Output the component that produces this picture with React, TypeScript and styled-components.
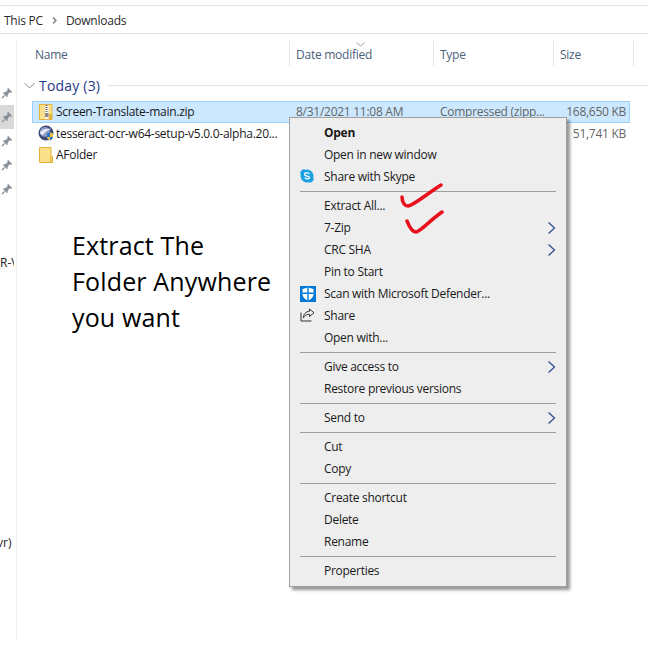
import React from 'react'
import styled, { createGlobalStyle } from 'styled-components'

const GlobalStyle = createGlobalStyle`
  html, body {
    margin: 0;
    background: #fff;
    font-family: 'Open Sans', 'Noto Sans', sans-serif;
  }
`

const Page = styled.div`
  position: relative;
  width: 648px;
  height: 646px;
  overflow: hidden;
  background: #fff;
  padding-top: 5px;
  box-sizing: border-box;
`

const Breadcrumb = styled.div`
  display: flex;
  align-items: center;
  height: 27px;
  padding-left: 4px;
  font-size: 12px;
  letter-spacing: -0.25px;
  color: #2b2b2b;
  border-top: 1px solid #e3e3e3;
  border-bottom: 1px solid #e0e0e0;
`

const Crumb = styled.span`
  margin-top: 1px;
`

const CrumbArrow = styled.svg`
  width: 5px;
  height: 7px;
  margin: 2px 9px 0 9px;
`

const Body = styled.div`
  display: flex;
  margin-top: 7px;
`

const Sidebar = styled.div`
  width: 16px;
  height: 558px;
  flex: none;
  border-right: 1px solid #f0f0f0;
  overflow: hidden;
  padding-top: 40px;
`

const PinRow = styled.div<{ $active?: boolean }>`
  display: flex;
  align-items: center;
  justify-content: center;
  width: 14px;
  height: 24px;
  background: ${p => (p.$active ? '#d9d9d9' : 'transparent')};
`

const CutLabel = styled.div<{ $top: number; $indent?: number }>`
  width: 14px;
  overflow: hidden;
  white-space: nowrap;
  margin-top: ${p => p.$top}px;
  text-indent: ${p => p.$indent ?? 0}px;
  font-size: 12px;
  line-height: 16px;
  color: #222;
`

const Main = styled.div`
  flex: 1;
  min-width: 0;
`

const HeaderRow = styled.div`
  display: grid;
  grid-template-columns: 273px 144px 120px 80px;
  height: 25px;
`

const HeaderCell = styled.div`
  position: relative;
  display: flex;
  align-items: center;
  padding: 2px 0 0 6px;
  font-size: 12px;
  letter-spacing: -0.25px;
  color: #4c607a;
  border-right: 1px solid #e5e5e5;
  &:first-child {
    padding-left: 18px;
  }
`

const SortCaret = styled.svg`
  position: absolute;
  top: 1px;
  left: 66px;
  width: 9px;
  height: 5px;
`

const GroupRow = styled.div`
  display: flex;
  align-items: center;
  height: 24px;
  margin-top: 7px;
  padding-left: 7px;
  color: #1e3a8a;
  font-size: 14px;
  letter-spacing: 0.2px;
`

const GroupChevron = styled.svg`
  width: 11px;
  height: 7px;
  margin-right: 4px;
`

const GroupLine = styled.div`
  flex: 1;
  height: 1px;
  margin-left: 7px;
  background: #e3e3e3;
`

const FileList = styled.div`
  margin: 4px 18px 0 15px;
`

const FileRow = styled.div<{ $selected?: boolean }>`
  display: grid;
  grid-template-columns: 23px 240px 144px 90px 100px;
  align-items: center;
  height: 21.5px;
  box-sizing: border-box;
  border: 1px solid ${p => (p.$selected ? '#99d1ff' : 'transparent')};
  background: ${p => (p.$selected ? '#cce8ff' : 'transparent')};
  font-size: 12px;
  letter-spacing: -0.27px;
  white-space: nowrap;
`

const FileIcon = styled.div`
  display: flex;
  justify-content: center;
  padding-left: 2px;
`

const FileName = styled.span`
  color: #1a1a1a;
`

const FileMeta = styled.span<{ $right?: boolean }>`
  color: #666;
  text-align: ${p => (p.$right ? 'right' : 'left')};
  padding-right: ${p => (p.$right ? '4px' : 0)};
`

const Note = styled.div`
  position: absolute;
  left: 72px;
  top: 227px;
  font-size: 25px;
  line-height: 36px;
  letter-spacing: 0.15px;
  color: #000;
`

const Menu = styled.div`
  position: absolute;
  left: 289px;
  top: 117px;
  width: 278px;
  height: 470px;
  box-sizing: border-box;
  padding: 4px 10px 0 0;
  background: #eee;
  border: 1px solid #a0a0a0;
  box-shadow: 3px 3px 3px rgba(0, 0, 0, 0.42);
`

const MenuItem = styled.div<{ $bold?: boolean }>`
  position: relative;
  display: flex;
  align-items: center;
  justify-content: space-between;
  height: 22px;
  padding-left: 34px;
  font-size: 12px;
  letter-spacing: -0.28px;
  font-weight: ${p => (p.$bold ? 700 : 400)};
  color: #1a1a1a;
`

const MenuLabel = styled.span`
  margin-bottom: 2px;
`

const MenuIcon = styled.span`
  position: absolute;
  left: 10px;
  top: 3px;
  display: flex;
`

const MenuSeparator = styled.div`
  height: 1px;
  margin: 3px 0 3px 10px;
  background: #a0a0a0;
`

const SubArrow = styled.svg`
  width: 9px;
  height: 14px;
`

const Tick = styled.svg`
  position: absolute;
  fill: none;
  stroke: #e8101a;
  stroke-width: 3.5;
  stroke-linecap: round;
  stroke-linejoin: round;
`

const PinIcon = () => (
  <svg width="12" height="12" viewBox="0 0 11 11">
    <path d="M6.4.8 10.2 4.6 9.2 5.2 8 4.9 6.1 6.8 6.2 8.6 5.4 9.2 1.8 5.6 2.4 4.8 4.2 4.9 6.1 3 5.800 1.800Z" fill="#858d95" />
    <path d="M3.200 7.800.8 10.200" stroke="#858d95" strokeWidth="1.200" />
  </svg>
)

const ZipIcon = () => (
  <svg width="14" height="16" viewBox="0 0 14 16">
    <path d="M.5.500h12.500v15H.5Z" fill="#fbe08a" stroke="#e2b33c" />
    <rect x="6" y="1" width="3.500" height="14" fill="#f4f4f4" />
    <path d="M6.500 1.500h2M6.500 3.500h2M6.500 5.500h2M6.500 7.500h2" stroke="#6e6e6e" />
    <rect x="6" y="9" width="3.500" height="4" fill="#8a8a8a" />
    <rect x="10" y="10" width="3" height="5" fill="#e2b33c" />
  </svg>
)

const SetupIcon = () => (
  <svg width="16" height="16" viewBox="0 0 16 16">
    <circle cx="8" cy="8" r="7.500" fill="#3d4a78" />
    <circle cx="7" cy="7" r="5" fill="#8d9bc8" />
    <path d="M2 7c3-3 7-4 11-3-3 1-6 3-8 6-2 0-3-1-3-3Z" fill="#e8e8f4" />
    <path d="M9 8.500l3-1 3 1v3.500c0 1.500-1.500 2.800-3 3.500-1.500-.7-3-2-3-3.500Z" fill="#1f6fd0" />
    <path d="M12 7.500l3 1v3.500h-3ZM9 12h3v3.500c-1.500-.7-3-2-3-3.500Z" fill="#f2c230" />
  </svg>
)

const FolderIcon = () => (
  <svg width="14" height="16" viewBox="0 0 14 16">
    <path d="M.5.500h11.500v15H.5Z" fill="#fbe08a" stroke="#e2b33c" />
    <path d="M12 9.500h1.500v6H12Z" fill="#f7d774" stroke="#e2b33c" />
  </svg>
)

const SkypeIcon = () => (
  <svg width="14" height="14" viewBox="0 0 14 14">
    <path d="M4 .3A3.700 3.700 0 0 0 .7 5.600 6.400 6.400 0 0 0 8.400 13.300 3.700 3.700 0 0 0 13.300 8.400 6.400 6.400 0 0 0 5.600.7 3.700 3.700 0 0 0 4 .3Z" fill="#1ba1e2" />
    <path d="M9.300 4.800C8.800 4 8 3.600 7 3.600c-1.400 0-2.400.7-2.400 1.800 0 2.300 4.800 1.200 4.800 3.200 0 .7-.8 1.200-2.300 1.200-.8 0-1.600-.4-2.100-1.200" fill="none" stroke="#fff" strokeWidth="1.300" />
  </svg>
)

const DefenderIcon = () => (
  <svg width="16" height="16" viewBox="0 0 16 16">
    <rect width="16" height="16" fill="#0078d7" />
    <path d="M2.500 3 8 1.500 13.500 3v5c0 3-2.500 5.500-5.500 6.500C5 13.500 2.500 11 2.500 8Z" fill="#fff" />
    <path d="M7.300 1.500h1.400v13H7.300ZM2.500 6.500h11v1.400h-11Z" fill="#0078d7" />
  </svg>
)

const ShareIcon = () => (
  <svg width="15" height="14" viewBox="0 0 15 14" fill="none" stroke="#333" strokeWidth="1">
    <path d="M1 4.500v8.500h10.500" />
    <path d="M9.500 1 14 4.800 9.500 8.500V6.300C6.500 6.300 4.500 7.500 3.300 10 3.500 6.500 5.500 3.500 9.500 3.300Z" />
  </svg>
)

type MenuEntry = {
  label: string
  bold?: boolean
  sub?: boolean
  icon?: React.ReactNode
}

// each inner list is one block between two separators
const menuGroups: MenuEntry[][] = [
  [
    { label: 'Open', bold: true },
    { label: 'Open in new window' },
    { label: 'Share with Skype', icon: <SkypeIcon /> },
  ],
  [
    { label: 'Extract All...' },
    { label: '7-Zip', sub: true },
    { label: 'CRC SHA', sub: true },
    { label: 'Pin to Start' },
    { label: 'Scan with Microsoft Defender...', icon: <DefenderIcon /> },
    { label: 'Share', icon: <ShareIcon /> },
    { label: 'Open with...' },
  ],
  [{ label: 'Give access to', sub: true }, { label: 'Restore previous versions' }],
  [{ label: 'Send to', sub: true }],
  [{ label: 'Cut' }, { label: 'Copy' }],
  [{ label: 'Create shortcut' }, { label: 'Delete' }, { label: 'Rename' }],
  [{ label: 'Properties' }],
]

const ContextMenu = () => (
  <Menu>
    {menuGroups.map((group, i) => (
      <React.Fragment key={i}>
        {i > 0 && <MenuSeparator />}
        {group.map(item => (
          <MenuItem key={item.label} $bold={item.bold}>
            {item.icon && <MenuIcon>{item.icon}</MenuIcon>}
            <MenuLabel>{item.label}</MenuLabel>
            {item.sub && (
              <SubArrow viewBox="0 0 9 14">
                <path d="M1.500 1.500 7.500 7 1.500 12.500" fill="none" stroke="#33508f" strokeWidth="1.300" />
              </SubArrow>
            )}
          </MenuItem>
        ))}
      </React.Fragment>
    ))}
  </Menu>
)

export default function App() {
  return (
    <Page>
      <GlobalStyle />
      <Breadcrumb>
        <Crumb>This PC</Crumb>
        <CrumbArrow viewBox="0 0 5 7">
          <path d="M1 .5 4 3.500 1 6.500" fill="none" stroke="#777" strokeWidth="1.300" />
        </CrumbArrow>
        <Crumb>Downloads</Crumb>
      </Breadcrumb>
      <Body>
        <Sidebar>
          {[0, 1, 2, 3, 4].map(i => (
            <PinRow key={i} $active={i === 1}>
              <PinIcon />
            </PinRow>
          ))}
          <CutLabel $top={54}>R-V</CutLabel>
          <CutLabel $top={264} $indent={-3}>
            vr)
          </CutLabel>
        </Sidebar>
        <Main>
          <HeaderRow>
            <HeaderCell>Name</HeaderCell>
            <HeaderCell>
              <SortCaret viewBox="0 0 9 5">
                <path d="M.5.500 4.500 4 8.500.5" fill="none" stroke="#9aa3ad" />
              </SortCaret>
              Date modified
            </HeaderCell>
            <HeaderCell>Type</HeaderCell>
            <HeaderCell>Size</HeaderCell>
          </HeaderRow>
          <GroupRow>
            <GroupChevron viewBox="0 0 11 7">
              <path d="M.5 1 5.500 6 10.500 1" fill="none" stroke="#8a8a8a" />
            </GroupChevron>
            Today (3)
            <GroupLine />
          </GroupRow>
          <FileList>
            <FileRow $selected>
              <FileIcon>
                <ZipIcon />
              </FileIcon>
              <FileName>Screen-Translate-main.zip</FileName>
              <FileMeta>8/31/2021 11:08 AM</FileMeta>
              <FileMeta>Compressed (zipp...</FileMeta>
              <FileMeta $right>168,650 KB</FileMeta>
            </FileRow>
            <FileRow>
              <FileIcon>
                <SetupIcon />
              </FileIcon>
              <FileName>tesseract-ocr-w64-setup-v5.0.0-alpha.20...</FileName>
              <FileMeta />
              <FileMeta />
              <FileMeta $right>51,741 KB</FileMeta>
            </FileRow>
            <FileRow>
              <FileIcon>
                <FolderIcon />
              </FileIcon>
              <FileName>AFolder</FileName>
            </FileRow>
          </FileList>
        </Main>
      </Body>
      <Note>
        Extract The
        <br />
        Folder Anywhere
        <br />
        you want
      </Note>
      <ContextMenu />
      <Tick style={{ left: 399, top: 181 }} width="44" height="30" viewBox="0 0 44 30">
        <path d="M3 16c0 6 3 9 6 9 6-1 16-10 33-21" />
      </Tick>
      <Tick style={{ left: 404, top: 210 }} width="44" height="26" viewBox="0 0 44 26">
        <path d="M3 11c2 5 5 11 9 11 5-1 12-10 26-20" />
      </Tick>
    </Page>
  )
}
